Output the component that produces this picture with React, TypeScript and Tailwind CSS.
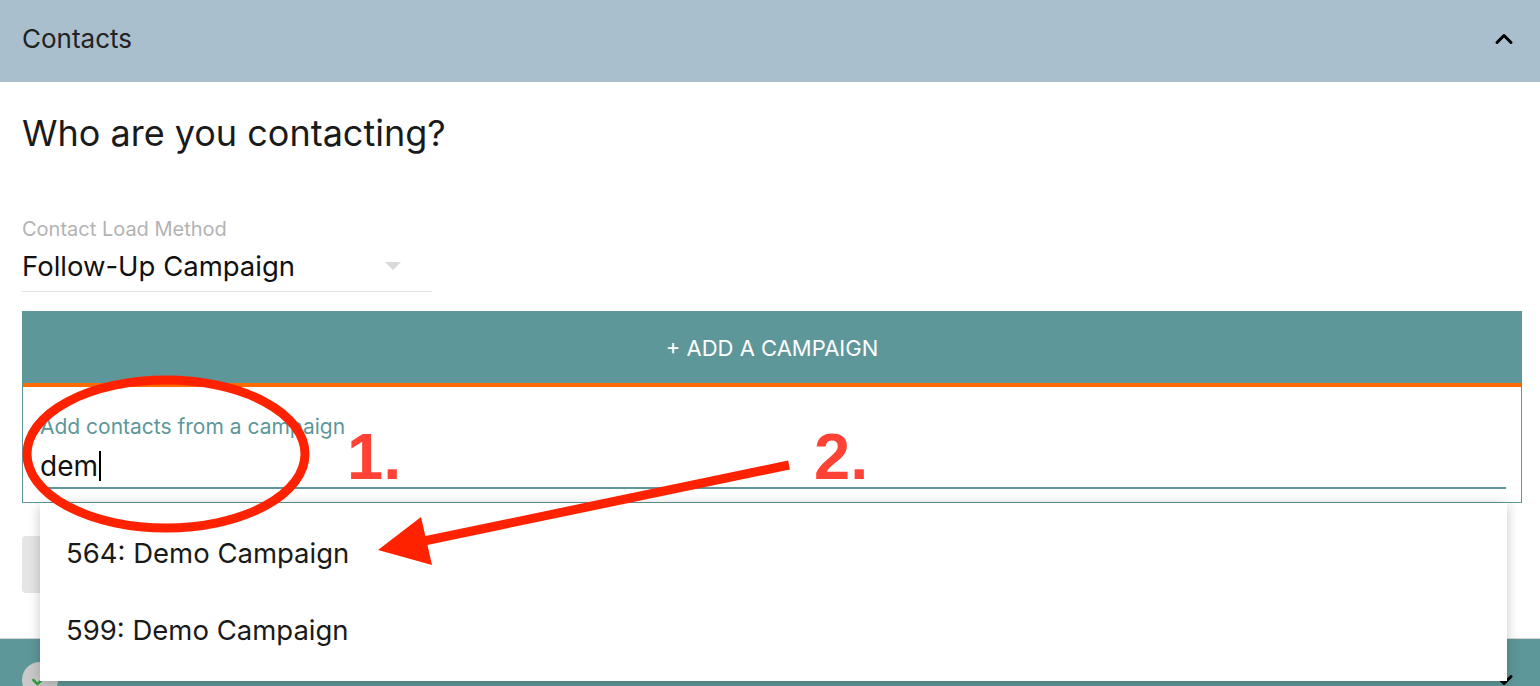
import { ChevronDown, ChevronUp, Check } from "lucide-react";

function Annotations() {
    return (
        <div aria-hidden className="pointer-events-none absolute inset-0 z-20">
            <svg className="absolute inset-0" width="1540" height="686" viewBox="0 0 1540 686">
                <ellipse cx="166" cy="454" rx="139" ry="74" fill="none" stroke="#ff2200" strokeWidth="9" />
                <line x1="789" y1="465" x2="424" y2="541" stroke="#ff2200" strokeWidth="9" />
                <polygon points="378,550 421,517 432,565" fill="#ff2200" />
            </svg>
            <div className="absolute left-[347px] top-[424px] font-['Liberation_Sans',Arial,sans-serif] text-[65px] font-bold leading-[65px] text-[#ff4136]">
                1.
            </div>
            <div className="absolute left-[814px] top-[424px] font-['Liberation_Sans',Arial,sans-serif] text-[65px] font-bold leading-[65px] text-[#ff4136]">
                2.
            </div>
        </div>
    );
}

const campaigns = ["564: Demo Campaign", "599: Demo Campaign"];

export default function App() {
    return (
        <div className="relative h-[686px] w-[1540px] overflow-hidden bg-white font-['Inter',sans-serif] text-[#1a1a1a]">
            {/* Section header */}
            <header className="flex h-[82px] items-center justify-between bg-[#a9bfcd] pb-[4px] pl-[22px] pr-[22px]">
                <span className="text-[26px] leading-none text-[#222]">Contacts</span>
                <ChevronUp className="size-[28px] text-black" strokeWidth={2.6} />
            </header>

            <section className="pl-[22px] pr-[18px]">
                <h1 className="mt-[31px] text-[36px] leading-[40px]">Who are you contacting?</h1>

                {/* Load method select */}
                <div className="mt-[64px] w-[410px]">
                    <div className="text-[20px] leading-[24px] text-[#b3b3b3]">Contact Load Method</div>
                    <div className="mt-[7px] flex items-center justify-between border-b border-[#e2e2e2] pb-[7px] pr-[31px]">
                        <span className="text-[27.5px] leading-[36px] text-[#111]">Follow-Up Campaign</span>
                        <span className="h-0 w-0 border-x-[8px] border-t-[8px] border-x-transparent border-t-[#d9d9d9]" />
                    </div>
                </div>

                {/* Campaign box */}
                <div className="mt-[19px] border border-[#5e9799]">
                    <div className="flex h-[75px] items-center justify-center border-b-4 border-[#ff6a00] bg-[#5e9799] pt-[2px] text-[22px] text-white">
                        + ADD A CAMPAIGN
                    </div>
                    <div className="pb-[13px] pl-[17px] pr-[15px] pt-[28px]">
                        <div className="relative">
                            <div className="border-b-2 border-[#5e9799] pb-[5px]">
                                <div className="text-[21px] leading-[24px] text-[#5e9799]">Add contacts from a campaign</div>
                                <div className="mt-[11px] flex items-center text-[28px] leading-[32px] text-[#111]">
                                    dem
                                    <span className="ml-[1px] h-[30px] w-[2px] bg-black" />
                                </div>
                            </div>
                            <ul className="absolute left-0 right-[-1px] top-[calc(100%+14px)] z-10 bg-white py-[12px] shadow-[0_2px_12px_rgba(0,0,0,0.22)]">
                                {campaigns.map((c) => (
                                    <li key={c} className="flex h-[77px] items-center px-[26px] text-[27.5px] text-[#1a1a1a]">
                                        {c}
                                    </li>
                                ))}
                            </ul>
                        </div>
                    </div>
                </div>

                <button className="mt-[33px] h-[57px] w-[200px] rounded bg-[#e5e5e5]" />
            </section>

            {/* Next section header */}
            <div className="mt-[39px] flex h-[82px] items-center justify-between border-t border-[#d5d5d5] bg-[#5e9799] pl-[22px] pr-[22px]">
                <span className="flex size-[36px] items-center justify-center rounded-full bg-[#c9c9c9]">
                    <Check className="size-[20px] text-[#2f9e44]" strokeWidth={3} />
                </span>
                <ChevronDown className="size-[28px] text-black" strokeWidth={2.6} />
            </div>

            <Annotations />
        </div>
    );
}
